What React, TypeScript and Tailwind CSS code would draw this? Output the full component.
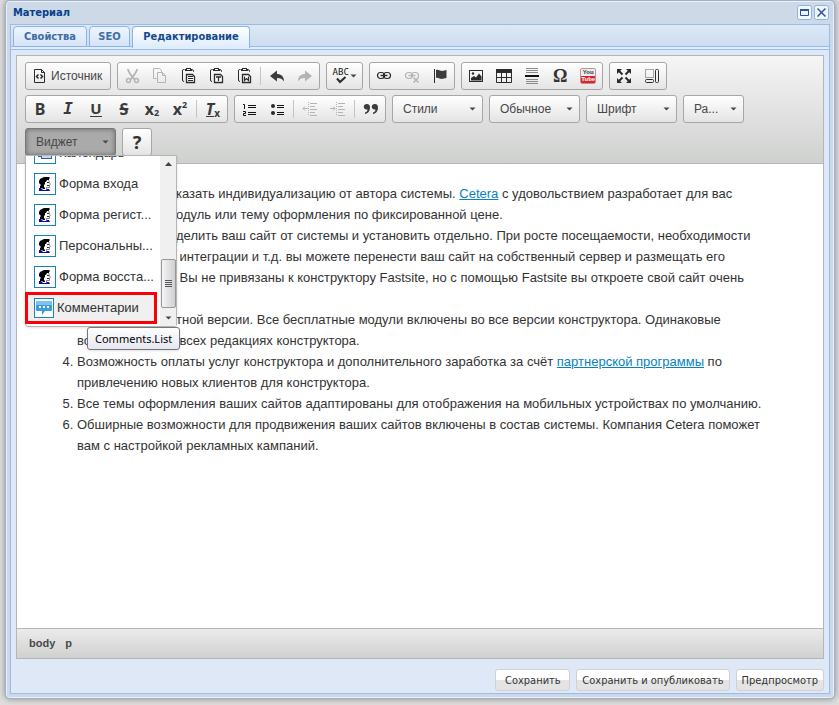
import type { ReactNode } from 'react';

const ink = '#2b2b2b';
const faded = '#b4b4b4';

interface ToolProps {
  label: string;
  children: ReactNode;
}

function Group({ children }: { children: ReactNode }) {
  return (
    <div className="flex h-7 items-stretch rounded-[3px] border border-[#a6a6a6] bg-linear-to-b from-white to-[#e4e4e4]">
      {children}
    </div>
  );
}

function Tool({ label, children }: ToolProps) {
  return (
    <button type="button" aria-label={label} title={label} className="flex w-7 items-center justify-center">
      {children}
    </button>
  );
}

function Divider() {
  return <span className="mx-0.5 my-1 w-px bg-[#c4c4c4]" />;
}

function Icon({ children }: { children: ReactNode }) {
  return (
    <svg width="16" height="16" viewBox="0 0 16 16" fill="none" aria-hidden="true" className="shrink-0">
      {children}
    </svg>
  );
}

function Caret() {
  return (
    <svg width="7" height="4" viewBox="0 0 7 4" aria-hidden="true" className="shrink-0">
      <path d="M0.5 0.5h6L3.5 3.5z" fill="#474747" />
    </svg>
  );
}

function Combo({ label, wide = true }: { label: string; wide?: boolean }) {
  return (
    <button
      type="button"
      aria-haspopup="listbox"
      className={`flex h-7 items-center justify-between rounded-[3px] border border-[#a6a6a6] bg-linear-to-b from-white to-[#e4e4e4] pr-1.5 pl-2.5 text-xs text-[#474747] ${
        wide ? 'w-[91px]' : 'w-[61px]'
      }`}
    >
      {label}
      <Caret />
    </button>
  );
}

function PasteIcon({ children }: { children: ReactNode }) {
  return (
    <Icon>
      <path d="M4.5 1.5H3.5Q2.500 1.500 2.500 3V12Q2.500 13.500 4 13.500M12 1.500Q13.500 1.500 13.500 3.500V4" stroke={ink} />
      <path d="M5 1h1V0h5v1h1v2H5z" fill={ink} />
      <path d="M7 1h3v1H7z" fill="#fff" />
      <path d="M6.500 6.500h6l2 2v6h-8z" fill="#fff" stroke={ink} strokeWidth="1.300" />
      {children}
    </Icon>
  );
}

function ArrowIcon({ color, flip = false }: { color: string; flip?: boolean }) {
  return (
    <Icon>
      <path
        transform={flip ? 'matrix(-1 0 0 1 16 0)' : undefined}
        d="M1 8l7-5.500v3.500c4 0 7 2 7 7.500c-1.500-2.500-3.500-3.500-7-3.500v3.500z"
        fill={color}
      />
    </Icon>
  );
}

function LinkShape({ color }: { color: string }) {
  return (
    <g stroke={color} strokeWidth="1.200">
      <rect x="1.500" y="4.500" width="7" height="6" rx="3" />
      <rect x="7.500" y="4.500" width="7" height="6" rx="3" />
      <path d="M4.500 7.500h7" strokeWidth="1.400" />
    </g>
  );
}

function IndentIcon({ right = false }: { right?: boolean }) {
  return (
    <Icon>
      <path d="M8 2.500h7M8 5.500h5M8 8.500h7M8 11.500h5M8 14.500h7" stroke={faded} />
      <path d="M6.500 1v14" stroke={faded} strokeDasharray="1 1" />
      <path d={right ? 'M0 7.500h5M3 5.500l2 2l-2 2' : 'M1 7.500h5M3 5.500l-2 2l2 2'} stroke={faded} />
    </Icon>
  );
}

function HeadIcon() {
  return (
    <svg width="16" height="16" viewBox="0 0 16 16" aria-hidden="true">
      <path d="M11.500 3.500l1 3 .8 2-.8.500v2.500h-3v2" fill="none" stroke="#666" strokeWidth="0.800" />
      <path d="M5 2l2-1h5l1 1-1 1v1h-2L9 6H8v2l-1 1v2l1 1v1H6l-1-1H3v-2l1-1-2-2V5l1-2z" fill="#000" />
      <path d="M10 6h2v1h-2zM10 9h2v1h-2z" fill="#333" />
      <path d="M2 12h2l2 2h3l1-1h2l1 2H2z" fill="#0a0ab0" />
    </svg>
  );
}

function TopRow() {
  return (
    <div className="flex flex-wrap gap-x-1.5 gap-y-[5px]">
      <Group>
        <button type="button" className="flex items-center gap-[3px] pr-2 pl-1.5 text-xs text-[#474747]">
          <Icon>
            <path d="M2.500 1.500h7l3 3v10h-10z" stroke={ink} />
            <path d="M9.500 1.500v3h3" stroke={ink} />
            <path d="M6.500 6.500L4.500 8.500l2 2M8.500 6.500l2 2l-2 2" stroke={ink} strokeWidth="1.500" />
          </Icon>
          Источник
        </button>
      </Group>
      <Group>
        <Tool label="Вырезать">
          <Icon>
            <path d="M4 1c0 3 2 5 6.500 10.500M13 1c0 3-2 5-6.500 10.500" stroke={faded} strokeWidth="1.800" />
            <circle cx="4.500" cy="12.500" r="2" stroke={faded} strokeWidth="1.500" />
            <circle cx="12.500" cy="12.500" r="2" stroke={faded} strokeWidth="1.500" />
          </Icon>
        </Tool>
        <Tool label="Копировать">
          <Icon>
            <path d="M4.500 10.500h-3v-10h6l2 2v2" stroke={faded} />
            <path d="M5.500 4.500h5l3 3v7h-8zM10.500 4.500v3h3" stroke={faded} />
          </Icon>
        </Tool>
        <Tool label="Вставить">
          <PasteIcon>
            <path d="M8 8.500h5M8 10.500h5M8 12.500h5" stroke={ink} />
          </PasteIcon>
        </Tool>
        <Tool label="Вставить только текст">
          <PasteIcon>
            <path d="M8 9h5M10.500 9v4" stroke={ink} strokeWidth="1.300" />
          </PasteIcon>
        </Tool>
        <Tool label="Вставить из Word">
          <PasteIcon>
            <path d="M8.500 8.500v4l2-2l2 2v-4" stroke={ink} strokeWidth="1.200" />
          </PasteIcon>
        </Tool>
        <Divider />
        <Tool label="Отменить">
          <ArrowIcon color="#3c3c3c" />
        </Tool>
        <Tool label="Повторить">
          <ArrowIcon color={faded} flip />
        </Tool>
      </Group>
      <Group>
        <button type="button" aria-label="Проверка орфографии" className="flex w-[35px] items-center justify-center gap-px">
          <span className="flex flex-col items-center">
            <span className="font-['DejaVu_Sans_Mono',monospace] text-[9px] leading-[8px] text-[#111]">ABC</span>
            <svg width="12" height="8" viewBox="0 0 12 8" fill="none" aria-hidden="true">
              <path d="M2 2.500l3 3.500L10.500 1" stroke={ink} strokeWidth="2" />
            </svg>
          </span>
          <Caret />
        </button>
      </Group>
      <Group>
        <Tool label="Ссылка">
          <Icon>
            <LinkShape color={ink} />
          </Icon>
        </Tool>
        <Tool label="Убрать ссылку">
          <Icon>
            <LinkShape color={faded} />
            <path d="M9 9l5 5M14 9l-5 5" stroke="#eee" strokeWidth="3" />
            <path d="M9.500 9.500l5 5M14.500 9.500l-5 5" stroke={faded} strokeWidth="1.600" />
          </Icon>
        </Tool>
        <Tool label="Якорь">
          <Icon>
            <path d="M2.500 1v14" stroke={ink} />
            <path d="M4 2c3-1 4 1 6 1s3-1 4.500-1v8c-2 0-3 1-5 1s-3-2-5.500-1z" fill="#3c3c3c" />
          </Icon>
        </Tool>
      </Group>
      <Group>
        <Tool label="Изображение">
          <Icon>
            <rect x="1.500" y="2.500" width="13" height="11" stroke={ink} />
            <path d="M3 12.500V10l3-2 2 1.500 3-4 2.500 3v4z" fill={ink} />
            <circle cx="5" cy="5.500" r="1.200" fill={ink} />
          </Icon>
        </Tool>
        <Tool label="Таблица">
          <Icon>
            <path d="M0 1h16v4H0z" fill={ink} />
            <path d="M0.500 2v12.500h15V2M5.500 5v9.500M10.500 5v9.500M0 9.500h16" stroke={ink} />
          </Icon>
        </Tool>
        <Tool label="Горизонтальная линия">
          <Icon>
            <path d="M2 0.500h12M2 2.500h12M2 4.500h12M2 11.500h12M2 13.500h12M2 15.500h12" stroke="#8b8b8b" />
            <path d="M1 7h14v2H1z" fill="#111" />
          </Icon>
        </Tool>
        <Tool label="Специальный символ">
          <span className="font-['Liberation_Serif',serif] text-lg leading-4 font-bold text-[#333]">Ω</span>
        </Tool>
        <Tool label="YouTube">
          <span className="flex h-4 w-4 flex-col overflow-hidden rounded-[2px] border border-[#c98b8b] text-center text-[6px] leading-[7px] font-bold">
            <span className="bg-[#e9eef0] text-[#333]">You</span>
            <span className="bg-[#d9262b] text-white">Tube</span>
          </span>
        </Tool>
      </Group>
      <Group>
        <Tool label="Развернуть">
          <Icon>
            <path d="M2 2l4.500 4.500M14 2L9.500 6.500M2 14l4.500-4.500M14 14L9.500 9.500" stroke={ink} strokeWidth="2" />
            <path d="M1 1h5L1 6zM15 1v5l-5-5zM1 15v-5l5 5zM15 15h-5l5-5z" fill={ink} />
          </Icon>
        </Tool>
        <Tool label="Отображать блоки">
          <Icon>
            <rect x="1.500" y="1.500" width="8" height="8" stroke="#555" strokeDasharray="1 1" />
            <rect x="1.500" y="11.500" width="8" height="3" rx="1" stroke={ink} />
            <rect x="11.500" y="1.500" width="3" height="13" rx="1" stroke={ink} />
          </Icon>
        </Tool>
      </Group>
    </div>
  );
}

const letter = "font-['Noto_Sans',sans-serif] text-base leading-4 font-bold text-[#3a3a3a]";

function FormatRow() {
  return (
    <div className="flex flex-wrap gap-x-1.5 gap-y-[5px]">
      <Group>
        <Tool label="Полужирный">
          <span className={letter}>B</span>
        </Tool>
        <Tool label="Курсив">
          <span className="font-['DejaVu_Sans_Mono',monospace] text-base leading-4 font-bold text-[#3a3a3a] italic">I</span>
        </Tool>
        <Tool label="Подчеркнутый">
          <span className="h-4 border-b border-[#3a3a3a] font-['Noto_Sans',sans-serif] text-[15px] leading-[14px] font-bold text-[#3a3a3a]">U</span>
        </Tool>
        <Tool label="Зачеркнутый">
          <span className={`${letter} px-px line-through decoration-2`}>S</span>
        </Tool>
        <Tool label="Подстрочный индекс">
          <span className="flex items-end font-['Noto_Sans',sans-serif] font-bold text-[#3a3a3a]">
            <span className="text-base leading-4">x</span>
            <span className="text-[9px] leading-[8px]">2</span>
          </span>
        </Tool>
        <Tool label="Надстрочный индекс">
          <span className="flex items-start font-['Noto_Sans',sans-serif] font-bold text-[#3a3a3a]">
            <span className="text-base leading-4">x</span>
            <span className="text-[9px] leading-[8px]">2</span>
          </span>
        </Tool>
        <Divider />
        <Tool label="Убрать форматирование">
          <span className="flex items-end text-[#3a3a3a]">
            <span className="h-4 border-b border-[#3a3a3a] font-['Noto_Sans',sans-serif] text-base leading-4 font-bold italic">T</span>
            <span className="font-['Noto_Sans',sans-serif] text-[10px] leading-[8px] font-bold">x</span>
          </span>
        </Tool>
      </Group>
      <Group>
        <Tool label="Нумерованный список">
          <Icon>
            <path d="M7 4.500h8M7 6.500h8M7 11.500h8M7 13.500h8" stroke="#111" />
            <path d="M2 3.500h1.500V8M2 10.500h2.500v2h-2v2h2.500" stroke="#111" />
          </Icon>
        </Tool>
        <Tool label="Маркированный список">
          <Icon>
            <path d="M8 4.500h7M8 6.500h7M8 11.500h7M8 13.500h7" stroke="#111" />
            <circle cx="4" cy="5" r="2" fill={ink} />
            <circle cx="4" cy="12" r="2" fill={ink} />
          </Icon>
        </Tool>
        <Divider />
        <Tool label="Уменьшить отступ">
          <IndentIcon />
        </Tool>
        <Tool label="Увеличить отступ">
          <IndentIcon right />
        </Tool>
        <Divider />
        <Tool label="Цитата">
          <Icon>
            <path
              d="M4 3a3 2.800 0 1 0 .500 5.500c0 1.500-1 2.500-2.500 3v1.500c3-.500 5-3 5-6.500c0-2-1-3.500-3-3.500zM12 3a3 2.800 0 1 0 .500 5.500c0 1.500-1 2.500-2.500 3v1.500c3-.500 5-3 5-6.500c0-2-1-3.500-3-3.500z"
              fill="#3c3c3c"
            />
          </Icon>
        </Tool>
      </Group>
      <Combo label="Стили" />
      <Combo label="Обычное" />
      <Combo label="Шрифт" />
      <Combo label="Ра..." wide={false} />
    </div>
  );
}

const widgets = ['Форма входа', 'Форма регист...', 'Персональны...', 'Форма восста...'];

function WidgetMenu() {
  return (
    <div className="absolute top-[27px] left-0 z-10 flex h-[172px] w-[152px] rounded-b-[3px] border border-[#b6b6b6] bg-white text-[13px] text-[#333] shadow">
      <div className="flex flex-1 flex-col justify-end overflow-hidden pb-[34px]">
        <button type="button" className="flex h-[31px] shrink-0 items-center gap-[3px] pl-2 text-left whitespace-nowrap">
          <span className="flex size-[22px] items-center justify-center border border-[#1583bd]">
            <Icon>
              <rect x="1.500" y="1.500" width="10" height="10" fill="#dce8fa" stroke="#3c5c9c" />
              <rect x="4.500" y="4.500" width="10" height="9" fill="#c5d8f5" stroke="#3c5c9c" />
            </Icon>
          </span>
          Календарь
        </button>
        {widgets.map((name) => (
          <button key={name} type="button" className="flex h-[31px] shrink-0 items-center gap-[3px] pl-2 text-left whitespace-nowrap">
            <span className="flex size-[22px] shrink-0 items-center justify-center border border-[#1583bd]">
              <HeadIcon />
            </span>
            {name}
          </button>
        ))}
      </div>
      {/* Highlighted entry */}
      <button
        type="button"
        className="absolute bottom-0.5 -left-px flex h-8 w-[132px] items-center gap-[3px] border-3 border-[#fb0007] bg-[#f0f0f0] pl-1.5 text-left"
      >
        <span className="flex size-5 shrink-0 items-center justify-center border border-[#1583bd] bg-white">
          <Icon>
            <path d="M0 2q0-1 1-1h14q1 0 1 1v8q0 1-1 1H9l-3 4v-4H1q-1 0-1-1z" fill="#3b9ddb" />
            <path d="M0 2q0-1 1-1h14q1 0 1 1v3H0z" fill="#7cc4ee" />
            <path d="M3 6h2v2H3zM7 6h2v2H7zM11 6h2v2h-2z" fill="#fff" />
          </Icon>
        </span>
        Комментарии
      </button>
      <div className="flex w-4 shrink-0 flex-col items-center bg-[#f0f0f0] py-1.5">
        <svg width="7" height="4" viewBox="0 0 7 4" aria-hidden="true" className="shrink-0">
          <path d="M0 4h7L3.500 0z" fill="#444" />
        </svg>
        <div className="mt-[93px] mb-auto flex h-[49px] w-[15px] flex-col items-center justify-center gap-px rounded-[2px] border border-[#979797] bg-linear-to-r from-[#f5f5f5] to-[#cfcfd3]">
          <span className="h-px w-[7px] bg-[#555]" />
          <span className="h-px w-[7px] bg-[#555]" />
          <span className="h-px w-[7px] bg-[#555]" />
          <span className="h-px w-[7px] bg-[#555]" />
        </div>
        <Caret />
      </div>
      <div
        role="tooltip"
        className="absolute top-[171px] left-[61px] rounded-[3px] border border-[#767676] bg-linear-to-b from-white to-[#e6e7f1] px-[7px] font-['Noto_Sans',sans-serif] text-[11px] leading-[21px] text-black shadow"
      >
        Comments.List
      </div>
    </div>
  );
}

// Room taken up by the open widget menu
function Inset({ children }: { children?: ReactNode }) {
  return <span className="inline-block w-[99px]">{children}</span>;
}

function Content() {
  return (
    <ol className="min-h-[440px] flex-1 list-decimal bg-white pt-[19px] pr-5 pl-[60px] text-[13px] leading-[21px] text-[#333]">
      <li>
        <Inset />казать индивидуализацию от автора системы.{' '}
        <a href="#cetera" className="text-[#0782c1] underline">Cetera</a> с удовольствием разработает для вас
        <br />
        <Inset />одуль или тему оформления по фиксированной цене.
      </li>
      <li>
        <Inset />делить ваш сайт от системы и установить отдельно. При росте посещаемости, необходимости
        <br />
        <Inset /> интеграции и т.д. вы можете перенести ваш сайт на собственный сервер и размещать его
        <br />
        <Inset /> Вы не привязаны к конструктору Fastsite, но с помощью Fastsite вы откроете свой сайт очень
        <br />
        <Inset />
      </li>
      <li>
        <Inset />тной версии. Все бесплатные модули включены во все версии конструктора. Одинаковые
        <br />
        <Inset>во</Inset> всех редакциях конструктора.
      </li>
      <li>
        Возможность оплаты услуг конструктора и дополнительного заработка за счёт{' '}
        <a href="#partners" className="text-[#0782c1] underline">партнерской программы</a> по
        <br />
        привлечению новых клиентов для конструктора.
      </li>
      <li>Все темы оформления ваших сайтов адаптированы для отображения на мобильных устройствах по умолчанию.</li>
      <li>
        Обширные возможности для продвижения ваших сайтов включены в состав системы. Компания Cetera поможет
        <br />
        вам с настройкой рекламных кампаний.
      </li>
    </ol>
  );
}

function FooterButton({ children }: { children: ReactNode }) {
  return (
    <button
      type="button"
      className="h-[22px] min-w-[75px] rounded-[3px] border border-[#d1d1d1] bg-linear-to-b from-white from-50% to-[#e4e4e4] to-50% px-[5px] pt-0.5 text-[11px] text-[#333]"
    >
      {children}
    </button>
  );
}

export default function App() {
  return (
    <div className="flex min-h-screen flex-col bg-[#dedede] pr-1 pb-1.5 pl-[5px] font-['DejaVu_Sans_Condensed','Noto_Sans',sans-serif]">
      <div className="flex flex-1 flex-col rounded-[5px] border border-[#a2b1c5] bg-[#ced9e7] px-1 pb-1 shadow-[inset_0_0_0_1px_#eaf1fb,0_0_6px_#888]">
        <header className="flex h-[23px] items-center gap-0.5 pr-px pl-[3px] text-[11px] font-bold text-[#04408c]">
          <h1 className="flex-1 pt-0.5">Материал</h1>
          <button type="button" aria-label="Развернуть окно" className="size-[15px]">
            <svg width="15" height="15" viewBox="0 0 15 15" fill="none" aria-hidden="true">
              <rect x="0.500" y="0.500" width="14" height="14" rx="2" fill="#f2f8ff" stroke="#8db2e3" />
              <path d="M3.500 4v6.500h8V4" stroke="#2b50a5" />
              <path d="M3 4h9v2H3z" fill="#2b50a5" />
            </svg>
          </button>
          <button type="button" aria-label="Закрыть" className="size-[15px]">
            <svg width="15" height="15" viewBox="0 0 15 15" fill="none" aria-hidden="true">
              <rect x="0.500" y="0.500" width="14" height="14" rx="2" fill="#f2f8ff" stroke="#8db2e3" />
              <path d="M3.500 3.500l8 8M11.500 3.500l-8 8" stroke="#2b50a5" strokeWidth="1.500" />
            </svg>
          </button>
        </header>

        <div className="flex flex-1 flex-col border border-[#99bce8] bg-[#dfe8f6]">
          <nav className="flex h-[25px] items-start gap-0.5 border-b border-[#99bce8] bg-linear-to-b from-[#dde8f5] to-[#cbdbef] px-0.5 pt-px text-[11px] font-bold text-[#416da3] shadow-[inset_0_-2px_0_#deecfd,inset_0_-3px_0_#99bce8]">
            <button type="button" className="h-[21px] w-[74px] rounded-t border border-[#8db2e3] bg-linear-to-b from-[#edf4fe] to-[#d6e4f8] pt-0.5">
              Свойства
            </button>
            <button type="button" className="h-[21px] w-[41px] rounded-t border border-[#8db2e3] bg-linear-to-b from-[#edf4fe] to-[#d6e4f8] pt-0.5">
              SEO
            </button>
            <button type="button" className="h-[22px] w-[118px] rounded-t border border-b-0 border-[#8db2e3] bg-linear-to-b from-white to-[#deecfd] text-[#15498b]">
              Редактирование
            </button>
          </nav>

          <main className="mx-[5px] mt-[5px] flex flex-1 flex-col border border-[#b6b6b6] font-['Liberation_Sans',sans-serif]">
            <div className="flex flex-col gap-[5px] border-b border-[#b6b6b6] bg-linear-to-b from-[#f5f5f5] to-[#cfd1cf] px-2 pt-1.5 pb-[7px]">
              <TopRow />
              <FormatRow />
              <div className="relative flex gap-1.5">
                <button
                  type="button"
                  aria-haspopup="listbox"
                  aria-expanded="true"
                  className="flex h-7 w-[91px] items-center justify-between rounded-[3px] border border-[#777] bg-[#aaa] pr-1.5 pl-2.5 text-xs text-[#474747] shadow-[inset_0_0_5px_#666]"
                >
                  Виджет
                  <Caret />
                </button>
                <Group>
                  <Tool label="Справка">
                    <span className="font-['Noto_Sans',sans-serif] text-lg leading-4 font-bold text-[#333]">?</span>
                  </Tool>
                </Group>
                <WidgetMenu />
              </div>
            </div>

            <Content />

            <div className="flex h-[30px] items-center gap-2.5 border-t border-[#b6b6b6] bg-linear-to-b from-[#ebebeb] to-[#cfd1cf] px-3 text-[11px] font-bold text-[#484848]">
              <a href="#body">body</a>
              <a href="#p">p</a>
            </div>
          </main>

          <footer className="flex justify-end gap-1.5 px-[5px] pt-2.5 pb-0.5">
            <FooterButton>Сохранить</FooterButton>
            <FooterButton>Сохранить и опубликовать</FooterButton>
            <FooterButton>Предпросмотр</FooterButton>
          </footer>
        </div>
      </div>
    </div>
  );
}
